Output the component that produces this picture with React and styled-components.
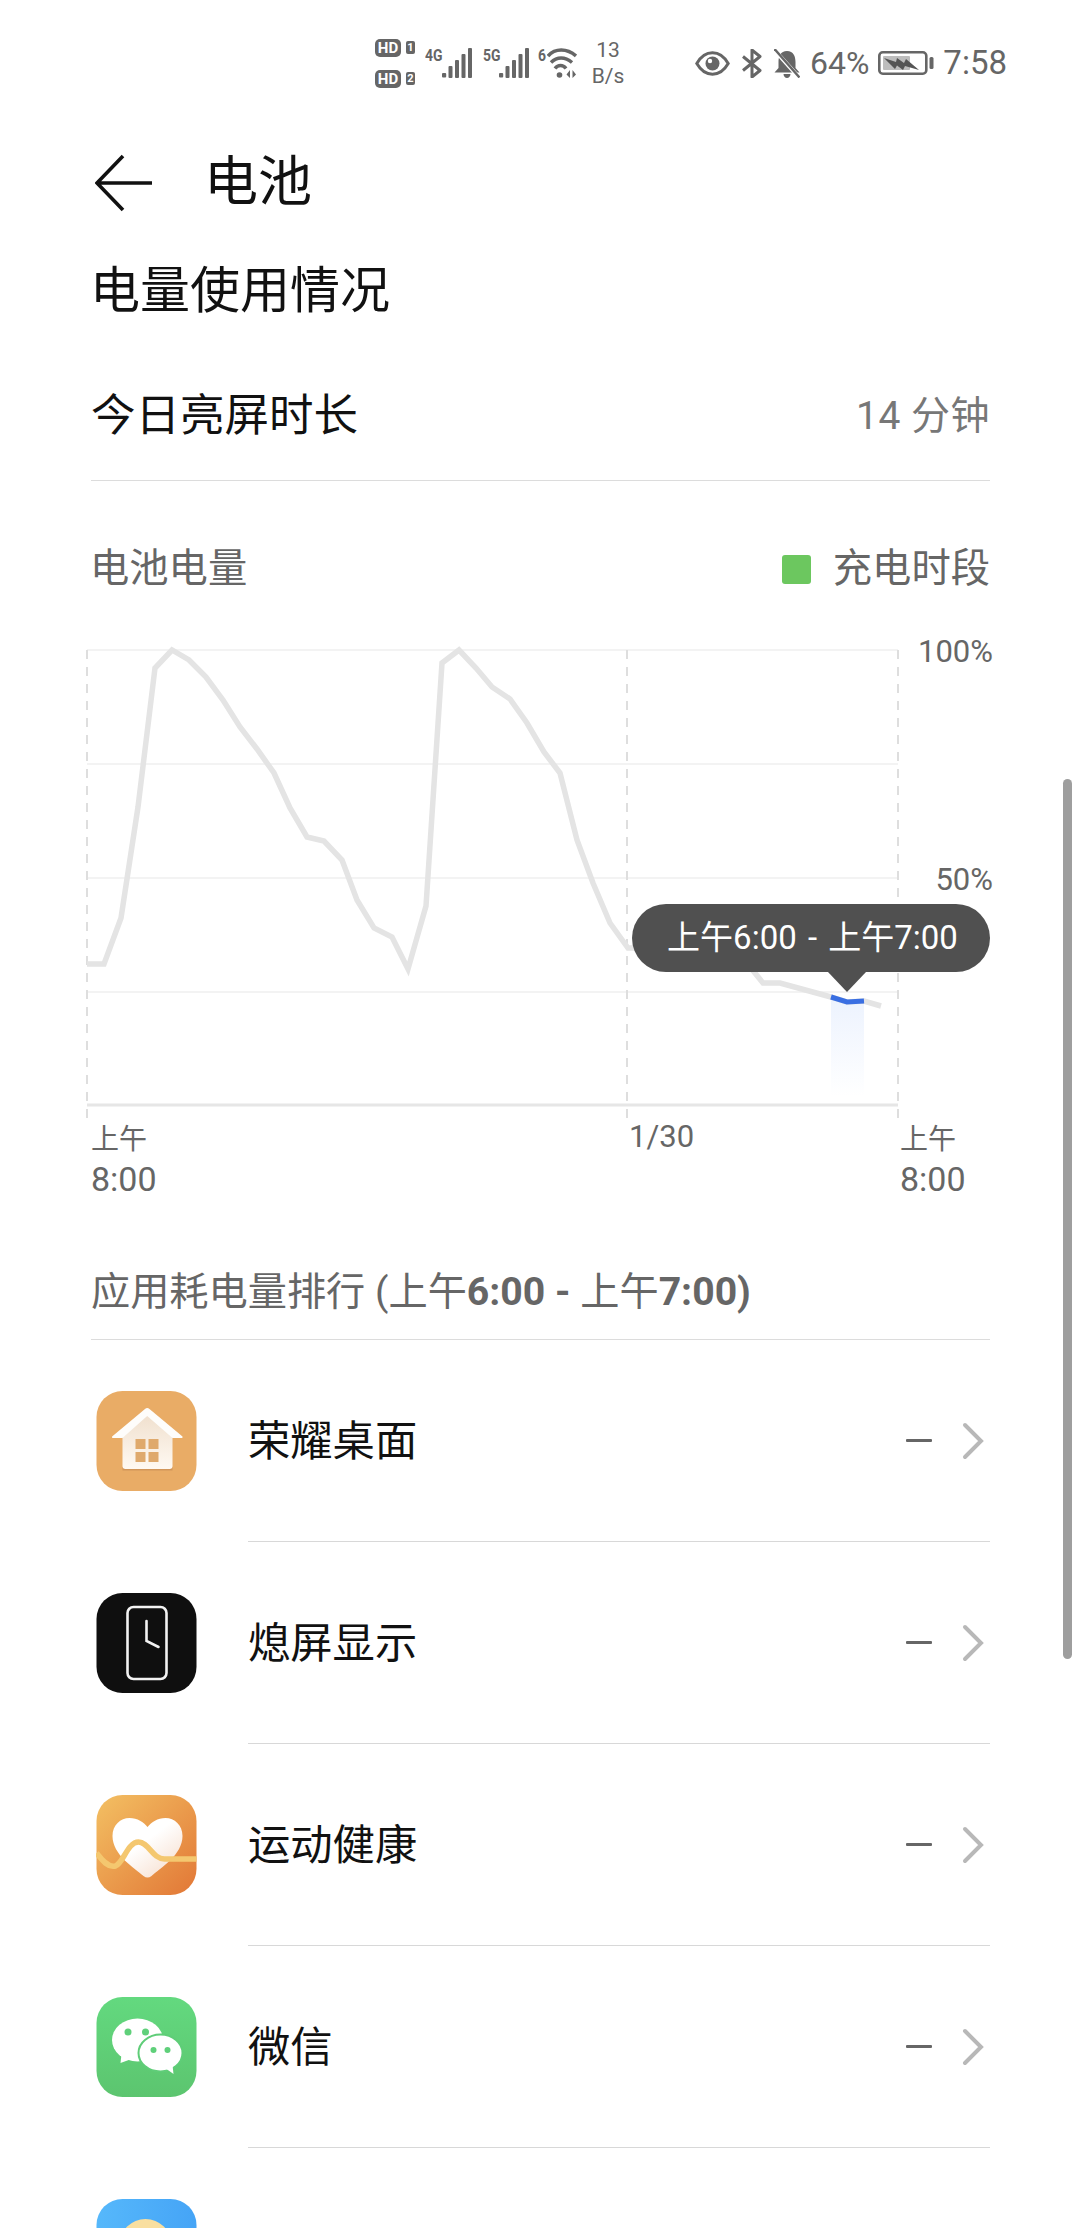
import React from "react";
import styled, { createGlobalStyle } from "styled-components";

const FONT = `Roboto, "Noto Sans CJK SC", sans-serif`;

const GlobalStyle = createGlobalStyle`
  html, body {
    margin: 0;
    padding: 0;
    background: #fff;
  }
  body {
    font-family: ${FONT};
  }
`;

const Page = styled.div`
  position: relative;
  width: 1080px;
  height: 2228px;
  overflow: hidden;
  background: #fff;
  color: #111;
`;

/* status bar */
const StatusBar = styled.div`
  height: 54px;
  margin-top: 36px;
  padding: 0 73px 0 375px;
  display: flex;
  align-items: center;
  justify-content: space-between;
  color: #666;
`;
const StatusGroup = styled.div`
  display: flex;
  align-items: center;
`;
const SimColumn = styled.div`
  display: flex;
  flex-direction: column;
  gap: 13px;
  margin-right: 10px;
`;
const SimRow = styled.div`
  display: flex;
  align-items: center;
  gap: 5px;
`;
const HdBadge = styled.span`
  width: 26px;
  height: 18px;
  background: #666;
  border-radius: 5px;
  color: #fff;
  font-size: 15px;
  font-weight: 700;
  line-height: 18px;
  text-align: center;
`;
const SimNumber = styled.span`
  width: 9px;
  height: 13px;
  background: #666;
  border-radius: 2px;
  color: #fff;
  font-size: 11px;
  font-weight: 700;
  line-height: 13px;
  text-align: center;
`;
const NetBlock = styled.div`
  display: flex;
  align-items: flex-start;
  margin-right: ${(p) => p.$gap}px;
`;
const NetLabel = styled.span`
  width: ${(p) => p.$width}px;
  margin-right: ${(p) => p.$gap}px;
  font-size: 17px;
  font-weight: 700;
  line-height: 14px;
  transform: scaleX(0.82);
  transform-origin: left center;
`;
const NetSpeed = styled.div`
  width: 40px;
  margin-left: 11px;
  text-align: center;
  font-size: 21px;
  line-height: 26px;
`;
const StatusIcon = styled.svg`
  display: block;
  margin-right: ${(p) => p.$gap || 0}px;
`;
const StatusText = styled.span`
  font-size: ${(p) => p.$size}px;
  line-height: 40px;
  margin-right: ${(p) => p.$gap || 0}px;
`;

/* header */
const Header = styled.header`
  height: 90px;
  margin-top: 48px;
  padding-left: 95px;
  display: flex;
  align-items: center;
  gap: 51px;
`;
const BackIcon = styled.svg`
  display: block;
`;
const Title = styled.h1`
  margin: 0;
  font-size: 54px;
  font-weight: 400;
  line-height: 60px;
  color: #111;
`;

const Content = styled.section`
  margin: 0 90px 0 90px;
`;
const SectionTitle = styled.h2`
  margin: 33px 0 0;
  font-size: 50px;
  font-weight: 400;
  line-height: 60px;
`;
const ScreenRow = styled.div`
  height: 130px;
  margin: 30px 0 0 1px;
  display: flex;
  align-items: center;
  justify-content: space-between;
  border-bottom: 1px solid #dcdcdc;
  box-sizing: border-box;
`;
const ScreenLabel = styled.span`
  font-size: 44.5px;
  line-height: 60px;
  color: #111;
`;
const ScreenValue = styled.span`
  font-size: 39px;
  line-height: 60px;
  color: #777;
  letter-spacing: 0.5px;
`;
const LegendRow = styled.div`
  height: 60px;
  margin-top: 58px;
  display: flex;
  align-items: center;
  justify-content: space-between;
`;
const GrayLabel = styled.span`
  font-size: 39.3px;
  line-height: 60px;
  color: #666;
`;
const Legend = styled.div`
  display: flex;
  align-items: center;
  gap: 22px;
`;
const LegendDot = styled.span`
  width: 29px;
  height: 29px;
  border-radius: 3px;
  background: #6cc75f;
`;

/* chart */
const ChartRow = styled.div`
  position: relative;
  margin: 41px 0 0 84px;
  display: flex;
  height: 480px;
`;
const Plot = styled.svg`
  display: block;
  flex: none;
`;
const YAxis = styled.div`
  width: 93px;
  display: flex;
  flex-direction: column;
`;
const YLabel = styled.span`
  height: 228px;
  font-size: 31px;
  line-height: 24px;
  text-align: right;
  color: #666;
`;
const Tooltip = styled.div`
  position: absolute;
  left: 548px;
  top: 264px;
  width: 358px;
  height: 68px;
  border-radius: 34px;
  background: #505050;
  color: #fff;
  font-size: 33px;
  line-height: 68px;
  text-align: center;
  text-indent: 3px;
  word-spacing: 3px;
  &::after {
    content: "";
    position: absolute;
    left: 196px;
    top: 68px;
    border-left: 19px solid transparent;
    border-right: 19px solid transparent;
    border-top: 20px solid #505050;
  }
`;
const XAxis = styled.div`
  margin-left: 91px;
  display: grid;
  grid-template-columns: 538px 271px auto;
  color: #666;
`;
const XCell = styled.div`
  display: flex;
  flex-direction: column;
`;
const XMeridiem = styled.span`
  margin-top: 3px;
  font-size: 28px;
  line-height: 33px;
`;
const XDate = styled.span`
  margin-top: -1px;
  font-size: 31px;
  line-height: 36px;
`;
const XTime = styled.span`
  margin-top: -1px;
  font-size: 34px;
  line-height: 48px;
`;

/* app ranking */
const RankHeading = styled.h3`
  margin: 64px 90px 0 91px;
  padding-bottom: 22px;
  border-bottom: 1px solid #dcdcdc;
  font-size: 39.2px;
  font-weight: 400;
  line-height: 50px;
  color: #666;
  b {
    font-weight: 700;
  }
`;
const AppRow = styled.div`
  height: 202px;
  margin-left: 96px;
  display: flex;
  align-items: center;
  gap: 51px;
`;
const AppBody = styled.div`
  flex: 1;
  height: 202px;
  margin-right: 90px;
  box-sizing: border-box;
  border-bottom: 1px solid #d8d8d8;
  display: flex;
  align-items: center;
  justify-content: space-between;
`;
const AppName = styled.span`
  padding-top: 2px;
  font-size: 42.3px;
  line-height: 60px;
  color: #111;
`;
const AppValue = styled.div`
  display: flex;
  align-items: center;
  gap: 30px;
  padding-right: 6px;
`;
const Dash = styled.span`
  width: 26px;
  height: 3.5px;
  border-radius: 1px;
  background: #666;
`;
const AppIcon = styled.svg`
  display: block;
  flex: none;
`;
const Chevron = styled.svg`
  display: block;
`;
const Scrollbar = styled.div`
  position: absolute;
  top: 779px;
  left: 1063px;
  width: 9px;
  height: 880px;
  border-radius: 5px;
  background: #9e9e9e;
`;

const SignalIcon = () => (
  <StatusIcon width="30" height="30" viewBox="0 0 30 30" fill="#666">
    <rect x="0" y="25" width="4.2" height="4.5" rx="1" />
    <rect x="6.5" y="18" width="4" height="12" rx="1" />
    <rect x="13" y="12" width="4" height="18" rx="1" />
    <rect x="19.5" y="6" width="4" height="24" rx="1" />
    <rect x="26" y="0" width="4" height="30" rx="1" />
  </StatusIcon>
);

const WifiIcon = () => (
  <StatusIcon width="30" height="30" viewBox="0 0 30 30" fill="none" stroke="#666" strokeWidth="3.5">
    <path d="M1 8C8 0 20 0 29 8" />
    <path d="M4 14.5C10 8.5 18 8.5 25 14.5" />
    <path d="M8 20.5C11 16.5 16 16.5 19 20.5" />
    <circle cx="12.5" cy="27" r="2.8" fill="#666" stroke="none" />
    <path d="M23 22v8l-3.5-3.5zM25.5 22v8l3.5-3.5z" fill="#666" stroke="none" />
  </StatusIcon>
);

const EyeIcon = () => (
  <StatusIcon $gap={11} width="35" height="25" viewBox="0 0 35 25">
    <path d="M1.8 12.5C7 3.5 12 1.8 17.5 1.8S28 3.5 33.2 12.5C28 21.5 23 23.2 17.5 23.2S7 21.5 1.8 12.5Z" fill="none" stroke="#666" strokeWidth="3" />
    <circle cx="17.5" cy="12.5" r="7" fill="#666" />
    <circle cx="15" cy="10" r="2.2" fill="#fff" />
  </StatusIcon>
);

const BluetoothIcon = () => (
  <StatusIcon $gap={11} width="22" height="29" viewBox="0 0 22 29">
    <path d="M2 7.5L19 21.5L11 28V1L19 7.5L2 21.5" fill="none" stroke="#666" strokeWidth="3" strokeLinejoin="round" />
  </StatusIcon>
);

const BellOffIcon = () => (
  <StatusIcon $gap={10} width="26" height="29" viewBox="0 0 26 29">
    <path d="M13 2C6.5 2 4.5 7.5 4.5 13V19L0.5 23.5H25.5L21.5 19V13C21.5 7.5 19.5 2 13 2Z" fill="#666" />
    <path d="M9.5 25H16.5C16.5 27.3 15 29 13 29S9.5 27.3 9.5 25Z" fill="#666" />
    <path d="M1 1.5L25 28.5" stroke="#fff" strokeWidth="4" />
    <path d="M0.5 0L25.5 28.5" stroke="#666" strokeWidth="2.4" />
  </StatusIcon>
);

const BatteryIcon = () => (
  <StatusIcon $gap={9} width="56" height="24" viewBox="0 0 56 24">
    <rect x="1.3" y="1.3" width="47" height="21.4" rx="3.5" fill="none" stroke="#666" strokeWidth="2.6" />
    <rect x="5" y="5" width="27" height="14" rx="1" fill="#bdbdbd" />
    <path d="M6 7L18 11L19 7L26 12L28 8L41 19L27 15L25 19L19 14.5L17 18Z" fill="#555" />
    <rect x="51.5" y="6" width="4" height="12" rx="1.5" fill="#666" />
  </StatusIcon>
);

const LINE_POINTS = [
  [87, 964], [104, 964], [121, 918], [138, 807], [155, 668], [172, 650], [189, 660],
  [206, 677], [223, 700], [240, 727], [257, 749], [274, 773], [290, 808], [307, 837],
  [324, 841], [342, 860], [357, 900], [374, 928], [392, 937], [408, 969], [426, 906],
  [442, 663], [459, 650], [476, 668], [492, 687], [510, 699], [527, 723], [544, 752],
  [560, 773], [577, 840], [593, 883], [610, 923], [628, 948], [645, 948], [746, 962],
  [763, 983], [780, 983], [831, 997], [847, 1002], [864, 1001], [881, 1006],
];
const GRID_Y = [650, 764, 878, 992];
const GRID_X = [87, 627, 898];

const BatteryPlot = () => (
  <Plot width="816" height="480" viewBox="84 640 816 480">
    <defs>
      <linearGradient id="selFade" x1="0" y1="0" x2="0" y2="1">
        <stop offset="0" stopColor="#edf3fe" />
        <stop offset="1" stopColor="#ffffff" />
      </linearGradient>
    </defs>
    {GRID_Y.map((y) => (
      <line key={y} x1="87" x2="898" y1={y} y2={y} stroke="#f3f3f3" strokeWidth="2" />
    ))}
    <line x1="87" x2="898" y1="1105" y2="1105" stroke="#e6e6e6" strokeWidth="3" />
    {GRID_X.map((x) => (
      <line key={x} x1={x} x2={x} y1="650" y2="1120" stroke="#dedede" strokeWidth="2" strokeDasharray="9 8" />
    ))}
    <rect x="831" y="1000" width="33" height="96" fill="url(#selFade)" />
    <polyline
      points={LINE_POINTS.map((p) => p.join(",")).join(" ")}
      fill="none"
      stroke="#e4e4e4"
      strokeWidth="5.5"
    />
    <polyline points="831,997 847,1002 864,1001" fill="none" stroke="#3a6fe2" strokeWidth="5" />
  </Plot>
);

const HomeIcon = () => (
  <AppIcon width="101" height="100" viewBox="0 0 100 100">
    <defs>
      <linearGradient id="homeBody" x1="0" y1="0" x2="0" y2="1">
        <stop offset="0" stopColor="#f0e0ce" />
        <stop offset="1" stopColor="#fff9f2" />
      </linearGradient>
    </defs>
    <rect width="100" height="100" rx="26" fill="#e9ac66" />
    <path d="M26 79.5H76V76H26Z" fill="#d2965a" />
    <path d="M26 44L50.7 24L76 44V75Q76 78 73 78H29Q26 78 26 75Z" fill="url(#homeBody)" />
    <path d="M48.5 18Q50.7 16 53 18L86 45.5Q86.5 47 85 47H76L50.7 25L26 47H16.5Q15 47 15.6 45.5Z" fill="#fefdfb" />
    <path d="M39 48H49V58H39ZM52 48H62V58H52ZM39 61H49V71H39ZM52 61H62V71H52Z" fill="#dfa96c" />
  </AppIcon>
);

const ClockIcon = () => (
  <AppIcon width="101" height="100" viewBox="0 0 100 100">
    <rect width="100" height="100" rx="26" fill="#0f0f0f" />
    <rect x="31" y="14" width="39" height="72" rx="6" fill="none" stroke="#f2f2f2" strokeWidth="2.6" />
    <path d="M50 28V48L62 54" fill="none" stroke="#f2f2f2" strokeWidth="2.6" strokeLinecap="round" />
  </AppIcon>
);

const HealthIcon = () => (
  <AppIcon width="101" height="100" viewBox="0 0 100 100">
    <defs>
      <linearGradient id="healthBg" x1="0" y1="0" x2="1" y2="1">
        <stop offset="0" stopColor="#f3c063" />
        <stop offset="1" stopColor="#e27736" />
      </linearGradient>
      <linearGradient id="healthHeart" x1="0.2" y1="0.2" x2="0.9" y2="1">
        <stop offset="0.3" stopColor="#ffffff" />
        <stop offset="1" stopColor="#f6dccb" />
      </linearGradient>
    </defs>
    <rect width="100" height="100" rx="26" fill="url(#healthBg)" />
    <path d="M47 81C38 73 16 60 16 41C16 30 24 23 33 23C41 23 47 27 51 32C55 27 61 23 69 23C78 23 86 30 86 41C86 60 64 73 55 81Q51 84 47 81Z" fill="url(#healthHeart)" />
    <path d="M0 58C6 66 12 73 19 71C27 68 31 47 42 47C52 47 56 64 68 64H100" fill="none" stroke="#f4c76f" strokeWidth="5.5" />
  </AppIcon>
);

const WechatIcon = () => (
  <AppIcon width="101" height="100" viewBox="0 0 100 100">
    <defs>
      <linearGradient id="wechatBg" x1="0" y1="0" x2="0" y2="1">
        <stop offset="0" stopColor="#63d97f" />
        <stop offset="1" stopColor="#5cc56f" />
      </linearGradient>
    </defs>
    <rect width="100" height="100" rx="26" fill="url(#wechatBg)" />
    <ellipse cx="41" cy="43" rx="25.5" ry="21.5" fill="#fff" />
    <path d="M25 57L24 66L35 62Z" fill="#fff" />
    <circle cx="31.5" cy="35" r="3.5" fill="#5fd07a" />
    <circle cx="49" cy="35" r="3.5" fill="#5fd07a" />
    <ellipse cx="64" cy="56" rx="22" ry="18.5" fill="#fff" stroke="#5fcd78" strokeWidth="2" />
    <path d="M70 72L77 77L76 68Z" fill="#fff" />
    <circle cx="57" cy="53" r="3" fill="#5fd07a" />
    <circle cx="71" cy="53" r="3" fill="#5fd07a" />
  </AppIcon>
);

const WeatherIcon = () => (
  <AppIcon width="101" height="100" viewBox="0 0 100 100">
    <defs>
      <linearGradient id="weatherBg" x1="0" y1="0" x2="1" y2="0">
        <stop offset="0" stopColor="#56b8fb" />
        <stop offset="1" stopColor="#45a4f6" />
      </linearGradient>
    </defs>
    <rect width="100" height="100" rx="26" fill="url(#weatherBg)" />
    <circle cx="49" cy="46" r="26" fill="#f9dfa0" />
  </AppIcon>
);

const APPS = [
  { name: "荣耀桌面", Icon: HomeIcon },
  { name: "熄屏显示", Icon: ClockIcon },
  { name: "运动健康", Icon: HealthIcon },
  { name: "微信", Icon: WechatIcon },
  { name: "", Icon: WeatherIcon },
];

const App = () => {
  return (
    <Page>
      <GlobalStyle />
      <StatusBar>
        <StatusGroup>
          <SimColumn>
            <SimRow>
              <HdBadge>HD</HdBadge>
              <SimNumber>1</SimNumber>
            </SimRow>
            <SimRow>
              <HdBadge>HD</HdBadge>
              <SimNumber>2</SimNumber>
            </SimRow>
          </SimColumn>
          <NetBlock $gap={11}>
            <NetLabel $width={16} $gap={1}>4G</NetLabel>
            <SignalIcon />
          </NetBlock>
          <NetBlock $gap={9}>
            <NetLabel $width={16} $gap={0}>5G</NetLabel>
            <SignalIcon />
          </NetBlock>
          <NetBlock $gap={0}>
            <NetLabel $width={8} $gap={1}>6</NetLabel>
            <WifiIcon />
          </NetBlock>
          <NetSpeed>
            13
            <br />
            B/s
          </NetSpeed>
        </StatusGroup>
        <StatusGroup>
          <EyeIcon />
          <BluetoothIcon />
          <BellOffIcon />
          <StatusText $size={32} $gap={9}>64%</StatusText>
          <BatteryIcon />
          <StatusText $size={33}>7:58</StatusText>
        </StatusGroup>
      </StatusBar>

      <Header>
        <BackIcon width="58" height="58" viewBox="0 0 58 58" fill="none" stroke="#111" strokeWidth="3.6">
          <path d="M57 29H3M28 2L2 29L28 56" />
        </BackIcon>
        <Title>电池</Title>
      </Header>

      <Content>
        <SectionTitle>电量使用情况</SectionTitle>
        <ScreenRow>
          <ScreenLabel>今日亮屏时长</ScreenLabel>
          <ScreenValue>14 分钟</ScreenValue>
        </ScreenRow>
        <LegendRow>
          <GrayLabel>电池电量</GrayLabel>
          <Legend>
            <LegendDot />
            <GrayLabel>充电时段</GrayLabel>
          </Legend>
        </LegendRow>
      </Content>

      <ChartRow>
        <BatteryPlot />
        <YAxis>
          <YLabel>100%</YLabel>
          <YLabel>50%</YLabel>
        </YAxis>
        <Tooltip>上午6:00 - 上午7:00</Tooltip>
      </ChartRow>
      <XAxis>
        <XCell>
          <XMeridiem>上午</XMeridiem>
          <XTime>8:00</XTime>
        </XCell>
        <XCell>
          <XDate>1/30</XDate>
        </XCell>
        <XCell>
          <XMeridiem>上午</XMeridiem>
          <XTime>8:00</XTime>
        </XCell>
      </XAxis>

      <RankHeading>
        应用耗电量排行 (上午<b>6:00 - </b>上午<b>7:00)</b>
      </RankHeading>
      {APPS.map(({ name, Icon }) => (
        <AppRow key={name || "more"}>
          <Icon />
          <AppBody>
            <AppName>{name}</AppName>
            <AppValue>
              <Dash />
              <Chevron width="22" height="38" viewBox="0 0 22 38" fill="none" stroke="#b8b8b8" strokeWidth="4" strokeLinecap="round">
                <path d="M3 3L19 19L3 35" />
              </Chevron>
            </AppValue>
          </AppBody>
        </AppRow>
      ))}
      <Scrollbar />
    </Page>
  );
};

export default App;
